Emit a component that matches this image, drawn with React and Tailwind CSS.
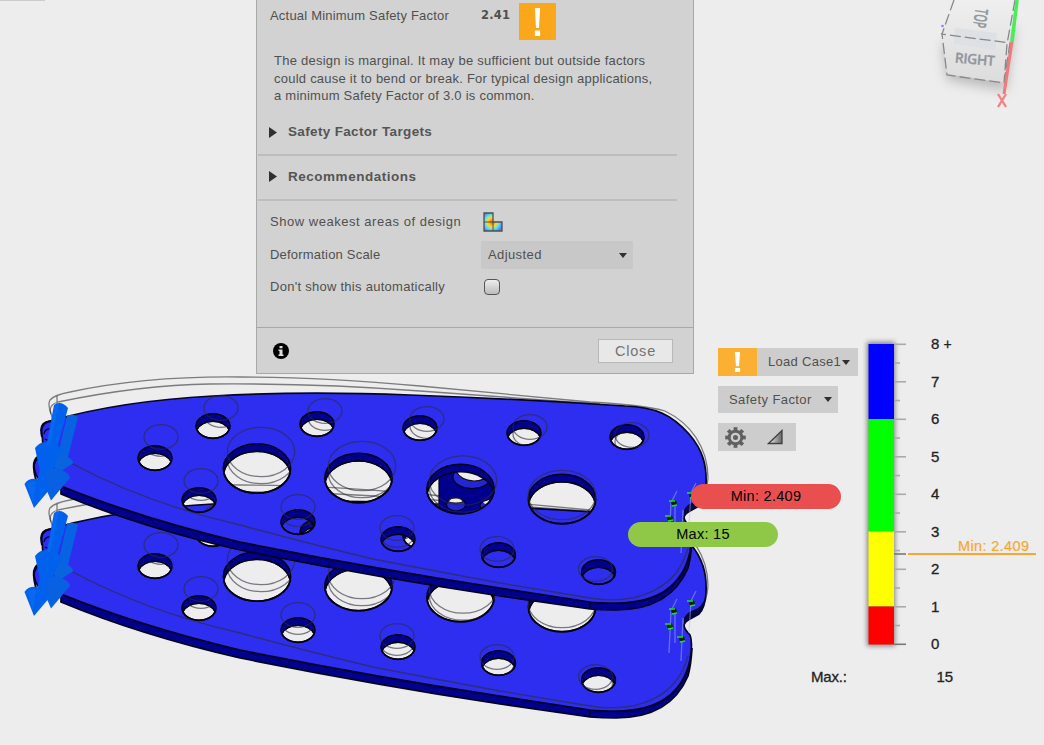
const SMALL = [
  [213, 426, 221, 408], [317, 424, 325, 411], [420, 428, 427, 419], [524, 433, 530, 427],
  [627, 437, 632, 435], [155, 458, 161, 437], [199, 500, 201, 481], [298, 522, 298, 507],
  [398, 539, 397, 528], [498.5, 555, 497, 549], [598.5, 572, 595.5, 569],
].map((h) => [...h, 17, 12.3]);
const LARGE = [
  [257, 468.5, 261, 452], [358.5, 478, 362, 466], [460.5, 489, 463, 480.5], [562, 499, 562, 495],
].map((h) => [...h, 33.7, 24.7]);
const HOLES = [...SMALL, ...LARGE];

const ellipse = (x, y, rx, ry) =>
  `M${x - rx} ${y}A${rx} ${ry} 0 1 0 ${x + rx} ${y}A${rx} ${ry} 0 1 0 ${x - rx} ${y}Z`;
const lens = (x, y, rx, ry, d = 7.5) => {
  const dx = rx * Math.sqrt(1 - (d / 2 / ry) ** 2);
  return `M${x - dx} ${y + d / 2}A${rx} ${ry} 0 0 0 ${x + dx} ${y + d / 2}A${rx} ${ry} 0 0 0 ${x - dx} ${y + d / 2}Z`;
};

const FACE =
  'M41 430 Q41 422 50 421 Q120 401 213 396 Q300 391 410 395 Q520 399 625 406 C656 407 672 415 689 434 C703 450 707 466 706 485 Q705 500 699 506 L690 511 Q684 514 684 518 Q685 522 690 527 Q693 535 690 552 C682 588 656 603 616 603 Q600 603 590 602 L500 588 Q370 568 240 542 Q140 518 61 486 L38 478 Q34 472 34 465 Q36 458 42 456 Q44 442 41 430 Z';
const SIDE =
  'M61 486 Q140 518 240 542 Q370 568 500 588 L590 602 Q600 603 616 603 C656 603 682 588 690 552 L692 540 Q691 557 688 568 C677 594 654 610 616 610 Q602 610 590 609 L500 596 Q370 576 240 550 Q140 527 61 494 Z';
const NOTCH = 'M705 490 Q704 503 699 506 L690 511 Q685 514 684 518 L684 510 Q688 503 694 502 Q702 499 705 490Z';

function Arrows() {
  return (
    <g fill="#0061ec">
      <g fill="none" stroke="#030330" strokeWidth="2">
        <path d="M42 437Q39 422 52 421M36 480Q32 465 35 460Q37 456 42 455" />
        <path d="M44 434q1-6 7-5M45 439q4 3 6-3" strokeWidth="1.3" />
      </g>
      <path fill="#0863e2" d="M67 416 Q72 413 78 417 L67 461 L57 459Z" />
      <path fill="#0a63df" d="M49 458 Q54 452 61 454 Q71 457 73.500 463 L58 473Z" />
      <path d="M54 405 Q61 400 68 408 L57 449 L46 447Z" />
      <path d="M35 448 Q40 441 48 442 Q58 443 61.500 450 L51 472 L40 472Z" />
      <path d="M42 462 L55 463 L46 490 L36 486Z" />
      <path fill="#0761e2" d="M46 471 Q52 466 62 470 Q69 473 70 478 L51 500.500 L47 491Z" />
      <path d="M24.500 484 Q28 478 37 479 Q48 481 50 489 L34 508Z" />
      <path fill="#0d6cf4" opacity=".6" d="M59 404L50 444L47 445L55 405ZM27 483Q32 480 36 482L33 503Z" />
    </g>
  );
}

function Pins() {
  return (
    <g>
      <path d="M677 491L671 503L669 545M696 483L691 493L689 525M683 510L681 553M675 503V535" stroke="#aebcff" opacity=".45" fill="none" strokeWidth="1.300" />
      {[[674, 503], [692, 495], [670, 518], [682, 531]].map(([x, y]) => (
        <g key={x}>
          <circle cx={x} cy={y} r="2.800" fill="#06240c" />
          <path d={`M${x - 5} ${y - 2}h6M${x - 2} ${y + 3}l5-1`} stroke="#18e322" strokeWidth="1.300" />
        </g>
      ))}
    </g>
  );
}

function Outline() {
  return (
    <g fill="none" stroke="#303030" strokeOpacity=".6" strokeWidth="1.3">
      <path d="M53 419Q47 405 50 400Q54 395 70 392Q145 376 240 377Q320 377 420 386L590 402Q645 405 665 411C690 423 708 447 708 478Q707 492 701 502" />
      <path d="M51 414Q48 405 58 402Q140 385 210 384Q315 383 420 391Q520 398 600 404M57 396V410" />
    </g>
  );
}

function Plate({ offset, upper }) {
  return (
    <g transform={`translate(0 ${offset})`}>
      <Outline />
      <path d={SIDE} fill="#00008c" stroke="#000018" strokeWidth="1.7" />
      <path d={FACE + HOLES.map(([x, y, , , rx, ry]) => lens(x, y, rx, ry)).join('')} fill="#2e2ef0" fillRule="evenodd" stroke="#050520" strokeWidth="1.7" />
      <path d={NOTCH} fill="#050540" />
      {upper && (
        <g>
          <clipPath id="bore"><path d={lens(460.5, 489, 33.7, 24.7)} /></clipPath>
          <g clipPath="url(#bore)" strokeWidth="1.200">
            <path d="M439 460H496V516H439Z" fill="#00008c" stroke="#00001f" />
            <ellipse cx="472" cy="477" rx="19" ry="11.500" fill="#2525d8" stroke="#00001f" />
            <path d="M456 471H487V474Q485 481 474 481Q460 480 456 471Z" fill="#ededed" stroke="#111" />
            <ellipse cx="456" cy="504.500" rx="9.500" ry="6.500" fill="#2525d8" stroke="#00001f" />
            <path d="M448.500 502Q449 498 456 498Q462 498 463 502Q456 504 448.500 502Z" fill="#ededed" stroke="#222" />
            <ellipse cx="488" cy="506" rx="8" ry="5.500" fill="#2525d8" stroke="#00001f" />
            <path d="M483 502l6-2v3l-4 1z" fill="#ededed" />
          </g>
        </g>
      )}
      {HOLES.map(([x, y, gx, gy, rx, ry]) => (
        <g key={`${x}`}>
          <path d={ellipse(x, y, rx, ry) + lens(x, y, rx, ry)} fill="#00008c" fillRule="evenodd" stroke="#000010" strokeWidth="1.5" />
          <ellipse cx={gx} cy={gy} rx={rx} ry={ry} fill="none" stroke="#2c2c38" strokeOpacity=".6" strokeWidth="1.3" />
          <clipPath id={`h${offset}-${Math.round(x)}`}><path d={lens(x, y, rx, ry)} /></clipPath>
          <ellipse clipPath={`url(#h${offset}-${Math.round(x)})`} cx={gx} cy={gy + 7} rx={rx} ry={ry} fill="none" stroke="#2c2c38" strokeOpacity=".6" strokeWidth="1.3" />
        </g>
      ))}
      <path d="M71 463Q145 503 240 525Q310 544 373 559Q440 572 500 583L590 598C640 606 678 587 688 548" fill="none" stroke="#2c2c38" strokeOpacity=".65" strokeWidth="1.3" />
      <path d="M590 602V609" stroke="#000018" />
      <Pins />
      <Arrows />
    </g>
  );
}

function ViewCube() {
  return (
    <svg className="absolute left-[900px] top-0" width="144" height="120" viewBox="0 0 144 120">
      <defs>
        <filter id="soft" x="-30%" y="-30%" width="160%" height="160%"><feGaussianBlur stdDeviation="6" /></filter>
        <linearGradient id="cube" x1="0" y1="0" x2="0" y2="1"><stop stopColor="#efefef" /><stop offset="1" stopColor="#dcdcdc" /></linearGradient>
      </defs>
      <path d="M42 45L115 25L106 91L47 80Z" fill="#999" opacity=".6" filter="url(#soft)" />
      <path d="M54 0H116L109 44L104 83L47 74L42 34Z" fill="url(#cube)" />
      <path d="M55 28L97 33L95 50L54 44Z" fill="#dde0e5" />
      <g fill="none" stroke="#888" strokeWidth="1.3" strokeDasharray="11 4">
        <path d="M54 0L42 34L47 75L104 83L110 43L41 34M115 0L107 44L104 83" />
      </g>
      <path d="M117 0L112 42" stroke="#45ef54" strokeWidth="3.5" />
      <path d="M112 42L104 94" stroke="#f07a7a" strokeWidth="3" />
      <circle cx="42.500" cy="26" r="1.300" fill="#8c84ee" />
      <g fontFamily="Open Sans, sans-serif" fontWeight="600" fill="#92969d" stroke="#92969d" strokeWidth=".3">
        <text transform="translate(54.500 62.500) rotate(5)" fontSize="14" textLength="40">RIGHT</text>
        <text transform="translate(75.500 8) rotate(98)" fontSize="18" textLength="19" lengthAdjust="spacingAndGlyphs">TOP</text>
      </g>
      <path d="M98 94L106 107M106 94L98 107" stroke="#f58080" strokeWidth="2.300" />
    </svg>
  );
}

function Legend() {
  return (
    <svg className="absolute left-[800px] top-[330px]" width="244" height="365" viewBox="800 330 244 365" fontFamily="Liberation Sans, sans-serif">
      <defs><filter id="barShadow" x="-40%" y="-5%" width="180%" height="110%"><feGaussianBlur stdDeviation="2.500" /></filter></defs>
      <rect x="867" y="342" width="28" height="304" fill="#555" opacity=".7" filter="url(#barShadow)" />
      <path d="M868.500 344H894V419H868.500Z" fill="#00f" />
      <path d="M868.500 419H894V531.500H868.500Z" fill="#0f0" />
      <path d="M868.500 531.500H894V606.500H868.500Z" fill="#ff0" />
      <path d="M868.500 606.500H894V644.500H868.500Z" fill="#f00" />
      {Array.from({ length: 17 }, (_, i) => (
        <path key={i} d={`M894 ${344.3 + i * 18.75}h${i % 2 ? 6 : 12}`} stroke={i === 16 ? '#777' : '#aaa'} strokeWidth="1.600" />
      ))}
      <path d="M894 554H906" stroke="#777" strokeWidth="1.600" />
      <path d="M908 554H1036" stroke="#f9a72e" strokeWidth="1.800" />
      <text x="958" y="551" fontSize="14.500" fill="#f9a72e" stroke="#f9a72e" strokeWidth=".2" textLength="71">Min: 2.409</text>
      <g fontSize="15" fill="#222" stroke="#222" strokeWidth=".3">
        {[8, 7, 6, 5, 4, 3, 2, 1, 0].map((n, i) => <text key={n} x="931" y={349 + i * 37.500}>{n}</text>)}
        <text x="943.500" y="349" fontSize="14">+</text>
        <text x="811" y="682" textLength="36">Max.:</text>
        <text x="936.500" y="682">15</text>
      </g>
    </svg>
  );
}

function Bang({ className, h }) {
  return (
    <span className={`flex items-center justify-center ${className}`}>
      <svg width="7" height={h} viewBox="0 0 8 28" preserveAspectRatio="none"><path d="M1 0H7L5.700 20H2.300ZM1 22.500H7V28H1Z" fill="#fff" /></svg>
    </span>
  );
}

const Caret = () => <svg width="8" height="5" viewBox="0 0 8 5"><path d="M0 0H8L4 5Z" fill="#303030" /></svg>;

function Section({ title, className }) {
  return (
    <div className={`flex items-center border-b-2 border-[#bdbdbd] text-[13.500px] font-bold text-[#555] ${className}`}>
      <svg className="ml-[11px] mr-[11px]" width="8" height="11" viewBox="0 0 8 11"><path d="M0 0L8 5.500L0 11Z" fill="#303030" /></svg>
      {title}
    </div>
  );
}

function Dialog() {
  return (
    <div className="absolute left-[256px] top-0 flex h-[374px] w-[438px] flex-col border border-t-0 border-[#a8a8a8] bg-[#d2d2d2] text-[13px] leading-[17.500px] tracking-[0.240px] text-[#505050]">
      <div className="flex h-[41px] items-start pl-[13px]">
        <span className="mt-[7px] w-[211px] tracking-[0.200px]">Actual Minimum Safety Factor</span>
        <b className="mt-[7px] w-[38px] font-['DejaVu_Sans'] text-[11.500px]">2.41</b>
        <Bang className="mt-[3px] h-[37px] w-[37px] bg-[#fba71b]" h="28" />
      </div>
      <p className="mt-[11px] h-[53px] whitespace-pre pl-[17px]">{'The design is marginal. It may be sufficient but outside factors\ncould cause it to bend or break. For typical design applications,\na minimum Safety Factor of 3.0 is common.'}</p>
      <Section title="Safety Factor Targets" className="mr-4 ml-px mt-[9px] h-[42px] pb-[4px] tracking-[0.340px]" />
      <Section title="Recommendations" className="mr-4 ml-px h-[45px] pb-[2px] tracking-[0.520px]" />
      <div className="flex h-[41px] items-center pb-px pl-[13px] pt-[2px]">
        <span className="w-[213px] tracking-[0.530px]">Show weakest areas of design</span>
        <svg width="20" height="20" viewBox="0 0 20 20">
          <defs><radialGradient id="heat" cx="9" cy="10" r="11" gradientUnits="userSpaceOnUse"><stop offset=".15" stopColor="#ff8a00" /><stop offset=".4" stopColor="#ffd82c" /><stop offset=".65" stopColor="#5de2ef" /><stop offset="1" stopColor="#5279e8" /></radialGradient></defs>
          <path d="M1 1H10V10H19V19H1Z" fill="url(#heat)" stroke="#505050" strokeWidth="1.300" />
          <path d="M1 10H10V19" fill="none" stroke="#505050" />
        </svg>
      </div>
      <div className="-mt-px flex h-[28px] items-center pl-[13px]">
        <span className="w-[211px] tracking-[0.200px]">Deformation Scale</span>
        <span className="flex h-[28px] w-[152px] items-center justify-between rounded-[1px] bg-[#c8c8c8] pl-[7px] pr-[6px] tracking-[0.400px]">Adjusted<Caret /></span>
      </div>
      <div className="flex h-[36px] items-center pl-[13px]">
        <span className="w-[214px] tracking-[0.270px]">Don't show this automatically</span>
        <span className="h-4 w-4 rounded-[4px] border-[1.500px] border-[#555] bg-linear-to-b from-[#eee] to-[#bbb]" />
      </div>
      <div className="mt-auto flex h-[46px] items-center justify-between border-t border-[#a8a8a8] pl-4 pr-5">
        <svg width="16" height="16" viewBox="0 0 16 16"><circle cx="8" cy="8" r="8" fill="#000" /><path d="M6.500 3h3v2.300h-3zM5.500 6.500h4v5h1v1.500h-5v-1.500h1v-3.500h-1z" fill="#ddd" /></svg>
        <button className="h-6 w-[75px] border border-[#b8b8b8] bg-[#e8e8e8] pt-[2px] text-[14.500px] tracking-[0.800px] text-[#747474]">Close</button>
      </div>
    </div>
  );
}

function Controls() {
  return (
    <div className="absolute left-[718px] top-[348px] flex flex-col items-start gap-[10px] text-[13px] tracking-[0.300px] text-[#505050]">
      <div className="flex h-[28px] w-[140px] bg-[#cdcdcd]">
        <Bang className="w-[39px] bg-[#fbb034]" h="20" />
        <span className="flex items-center gap-px whitespace-nowrap pl-[11px]">Load Case1<Caret /></span>
      </div>
      <div className="flex h-[27px] w-[120px] items-center justify-between whitespace-nowrap bg-[#cdcdcd] pl-[11px] pr-[6px] tracking-[0.420px]">Safety Factor<Caret /></div>
      <div className="flex h-[28px] w-[78px] items-center gap-[21px] bg-[#cdcdcd] pl-[7px]">
        <svg width="21" height="21" viewBox="-10 -10 20 20" fill="none" stroke="#606060">
          <circle r="6" strokeWidth="2.800" /><circle r="2.400" fill="#606060" stroke="none" />
          {[0, 45, 90, 135, 180, 225, 270, 315].map((a) => <path key={a} transform={`rotate(${a})`} d="M0-6.500V-9.800" strokeWidth="3.600" />)}
        </svg>
        <svg width="17" height="16" viewBox="0 0 17 16"><defs><linearGradient id="tri"><stop stopColor="#eee" /><stop offset="1" stopColor="#666" /></linearGradient></defs><path d="M1.500 14.500H15V1.500Z" fill="url(#tri)" stroke="#404040" strokeWidth="1.300" /></svg>
      </div>
    </div>
  );
}

export default function App() {
  return (
    <main className="relative h-[745px] w-[1044px] overflow-hidden bg-[#ededed] font-['Liberation_Sans',sans-serif]">
      <svg className="absolute left-0 top-0" width="1044" height="745" viewBox="0 0 1044 745">
        <Plate offset={108} />
        <Plate offset={0} upper />
      </svg>
      <div className="absolute left-0 top-0 h-px w-[45px] bg-[#ccc]" />
      <Dialog />
      <ViewCube />
      <Controls />
      <div className="absolute left-[691px] top-[484px] flex h-[25px] w-[150px] items-center justify-center rounded-full bg-[#ea4f4f] text-[14.500px] tracking-[0.300px] text-black">Min: 2.409</div>
      <div className="absolute left-[628px] top-[522px] flex h-[25px] w-[150px] items-center justify-center rounded-full bg-[#8fc846] text-[14.500px] tracking-[0.300px] text-black">Max: 15</div>
      <Legend />
    </main>
  );
}
